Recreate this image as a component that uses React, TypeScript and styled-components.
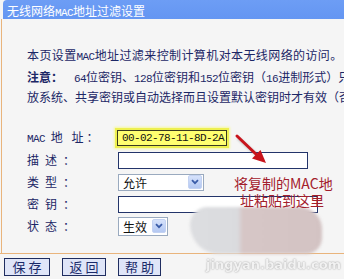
import React from "react";
import styled, { createGlobalStyle } from "styled-components";

const GlobalStyle = createGlobalStyle`
  body {
    margin: 0;
    background: #f5f5f5;
    font-family: "Noto Sans CJK SC", sans-serif;
  }
`;

const Page = styled.div`
  position: relative;
  width: 344px;
  height: 279px;
  overflow: hidden;
  background: #f5f5f5;
`;

const Frame = styled.div`
  height: 253px;
  border-bottom: 1px solid #e9b47c;
  display: flex;
  flex-direction: column;
`;

const Header = styled.div`
  margin-left: 3px;
  height: 19px;
  padding-left: 4px;
  border-top-left-radius: 4px;
  background: linear-gradient(#6d9df5, #6496f2);
  color: #fff;
  font-size: 12px;
  line-height: 21px;
  white-space: nowrap;
`;

const Body = styled.div`
  flex: 1;
  margin-left: 1px;
  border-left: 1px solid #e9b47c;
  padding: 27px 0 0 25px;
  color: #1c2766;
  font-size: 12px;
  white-space: nowrap;
  overflow: hidden;
`;

const Intro = styled.p`
  margin: 0 0 2px;
  line-height: 18px;
  letter-spacing: 0.4px;
`;

const Note = styled.p`
  margin: 0;
  line-height: 18px;
`;

const NoteHead = styled.b`
  margin-right: 11px;
`;

const Latin = styled.span`
  font-family: "Liberation Mono", monospace;
  font-size: 11px;
  letter-spacing: -0.6px;
`;

const Form = styled.div`
  margin-top: 21px;
  display: grid;
  grid-template-columns: 91px auto;
  grid-auto-rows: 22px;
  align-items: center;
  justify-items: start;
`;

const Label = styled.span<{ $gap: number }>`
  letter-spacing: ${(p) => p.$gap}px;
  line-height: 22px;
`;

const TextBox = styled.div<{ $w: number }>`
  box-sizing: border-box;
  width: ${(p) => p.$w}px;
  height: 17px;
  border: 1px solid #23346a;
  background: #fff;
`;

const MacBox = styled.div`
  box-sizing: border-box;
  margin-left: -1px;
  width: 110px;
  height: 16px;
  border: 1px solid #3a3a20;
  background: #ffff70;
  box-shadow: 0 0 0 2px #eef050, 0 0 2px 3px #f6f8a0;
  color: #111;
  padding-left: 4px;
  line-height: 14px;
  font-family: "Liberation Mono", monospace;
  font-size: 11px;
  letter-spacing: -0.6px;
`;

const Select = styled.div<{ $w: number; $h: number }>`
  box-sizing: border-box;
  width: ${(p) => p.$w}px;
  height: ${(p) => p.$h}px;
  border: 1px solid #9aaabf;
  background: #fff;
  display: flex;
  align-items: center;
  justify-content: space-between;
  padding: 0 1px 0 4px;
  color: #111;
  font-size: 12px;
`;

const Arrow = styled.span`
  width: 14px;
  height: 14px;
  border: 1px solid #c3d2f2;
  border-radius: 2px;
  box-sizing: border-box;
  background: linear-gradient(#d6e2fb, #b4c8f2);
  display: flex;
  align-items: center;
  justify-content: center;
`;

const ButtonBar = styled.div`
  display: flex;
  gap: 12px;
  padding: 4px 0 0 4px;
`;

const Button = styled.button<{ $w: number }>`
  width: ${(p) => p.$w}px;
  height: 18px;
  padding: 0;
  border: 1px solid #1f2d60;
  background: #dfe5f8;
  color: #1a2a6a;
  font-family: "Noto Sans CJK SC", sans-serif;
  font-size: 13px;
  line-height: 16px;
`;

const Callout = styled.div`
  position: absolute;
  left: 234px;
  top: 175px;
  color: #a3202c;
  font-size: 14px;
  line-height: 17px;
  white-space: nowrap;
`;

const CalloutLine = styled.div<{ $indent: number }>`
  padding-left: ${(p) => p.$indent}px;
`;

const ArrowMark = styled.svg`
  position: absolute;
  left: 230px;
  top: 130px;
`;

const Watermark = styled.div`
  position: absolute;
  left: 190px;
  top: 207px;
  width: 134px;
  height: 70px;
`;

const Blob = styled.div`
  width: 132px;
  height: 47px;
  border-radius: 24px 30px 22px 40px;
  background: linear-gradient(90deg, #dcdde0 0%, #dadbde 36%, #d6c6c6 40%, #d3c3c3 100%);
  filter: blur(1.5px);
`;

const MarkText = styled.div`
  margin: 3px 0 0 16px;
  color: #f2f2f2;
  font-family: "DejaVu Sans", sans-serif;
  font-size: 13px;
  font-weight: bold;
  text-shadow: 0 0 2px #a8a8a8, 0 0 1px #bcbcbc;
  white-space: nowrap;
  filter: blur(0.5px);
`;

const Chevron = () => (
  <svg width="8" height="6" viewBox="0 0 8 6">
    <path d="M1 1.2 L4 4.2 L7 1.2" fill="none" stroke="#3a5ca8" strokeWidth="1.8" />
  </svg>
);

export default function App() {
  return (
    <Page>
      <GlobalStyle />
      <Frame>
        <Header>
          无线网络<Latin>MAC</Latin>地址过滤设置
        </Header>
        <Body>
          <Intro>
            本页设置<Latin>MAC</Latin>地址过滤来控制计算机对本无线网络的访问。
          </Intro>
          <Note>
            <NoteHead>注意：</NoteHead>
            <Latin>64</Latin>位密钥、<Latin>128</Latin>位密钥和<Latin>152</Latin>位密钥（
            <Latin>16</Latin>进制形式）只有在
          </Note>
          <Note>放系统、共享密钥或自动选择而且设置默认密钥时才有效（否则</Note>
          <Form>
            <Label $gap={3}>
              <Latin>MAC</Latin> 地 址：
            </Label>
            <MacBox>00-02-78-11-8D-2A</MacBox>
            <Label $gap={6}>描述：</Label>
            <TextBox $w={190} />
            <Label $gap={6}>类型：</Label>
            <Select $w={86} $h={17}>
              允许
              <Arrow>
                <Chevron />
              </Arrow>
            </Select>
            <Label $gap={6}>密钥：</Label>
            <TextBox $w={200} />
            <Label $gap={6}>状态：</Label>
            <Select $w={50} $h={19}>
              生效
              <Arrow>
                <Chevron />
              </Arrow>
            </Select>
          </Form>
        </Body>
      </Frame>
      <ButtonBar>
        <Button $w={46}>保 存</Button>
        <Button $w={44}>返 回</Button>
        <Button $w={43}>帮 助</Button>
      </ButtonBar>
      <ArrowMark width="44" height="40" viewBox="0 0 44 40">
        <defs>
          <filter id="sh" x="-30%" y="-30%" width="160%" height="160%">
            <feGaussianBlur stdDeviation="1.2" />
          </filter>
        </defs>
        <path d="M8 8 L30 28" stroke="#888" strokeWidth="3" opacity="0.5" filter="url(#sh)" />
        <path d="M7 6 L28 26" stroke="#c8141c" strokeWidth="3" strokeLinecap="round" />
        <path d="M36 33 L22 28.5 L30.5 20 Z" fill="#c8141c" />
      </ArrowMark>
      <Watermark>
        <Blob />
        <MarkText>jingyan.baidu.com</MarkText>
      </Watermark>
      <Callout>
        <CalloutLine $indent={0}>将复制的MAC地</CalloutLine>
        <CalloutLine $indent={6}>址粘贴到这里</CalloutLine>
      </Callout>
    </Page>
  );
}
